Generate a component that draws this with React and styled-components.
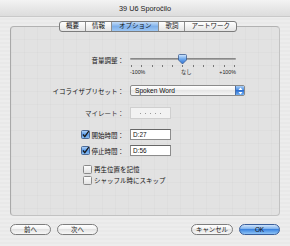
import React from "react";
import styled, { createGlobalStyle } from "styled-components";

const Global = createGlobalStyle`
  html, body { margin: 0; padding: 0; }
  body { background: #ececec; }
`;

const jp = `"Liberation Sans", "Noto Sans CJK JP", sans-serif`;

const Window = styled.div`
  width: 290px;
  height: 246px;
  display: flex;
  flex-direction: column;
  background: repeating-linear-gradient(0deg, #ededed 0 2px, #e9e9e9 2px 4px);
  font-family: ${jp};
  color: #111;
  overflow: hidden;
`;

const TitleBar = styled.div`
  height: 16px;
  flex: none;
  display: flex;
  align-items: center;
  justify-content: center;
  background: linear-gradient(#f3f3f3, #dcdcdc);
  border-bottom: 1px solid #c9c9c9;
  font-size: 7.3px;
  color: #1a1a1a;
`;

const Body = styled.div`
  flex: 1;
  display: flex;
  flex-direction: column;
  padding: 4px 10px 0 10px;
`;

const TabBar = styled.div`
  align-self: center;
  display: flex;
  height: 11px;
  margin-left: 6px;
  margin-bottom: -6px;
  position: relative;
  z-index: 1;
  border: 1px solid #7c7c7c;
  border-radius: 3px;
  overflow: hidden;
  background: linear-gradient(#ffffff, #e4e4e4);
  box-sizing: border-box;
`;

const Tab = styled.div`
  display: flex;
  align-items: center;
  padding: 0 ${(p) => p.$pad || 6}px;
  font-size: 6.5px;
  line-height: 1;
  border-left: ${(p) => (p.$first ? "none" : "1px solid #8e8e8e")};
  background: ${(p) =>
    p.$active ? "linear-gradient(#c2dcf8, #7fb0ea 50%, #9cc6f3)" : "transparent"};
`;

const Panel = styled.div`
  height: 190px;
  box-sizing: border-box;
  border: 1px solid #c2c2c2;
  border-top-color: #b2b2b2;
  border-left-color: #a9a9a9;
  border-radius: 4px;
  background-color: #e2e2e2;
  background-image: linear-gradient(90deg, rgba(0, 0, 0, 0.018) 1px, transparent 1px),
    linear-gradient(0deg, rgba(0, 0, 0, 0.018) 1px, transparent 1px);
  background-size: 13px 13px;
  display: flex;
  flex-direction: column;
  padding-top: 27px;
`;

const Row = styled.div`
  display: flex;
  align-items: ${(p) => (p.$top ? "flex-start" : "center")};
  gap: 6px;
  margin-top: ${(p) => p.$mt || 0}px;
  height: ${(p) => p.$h || 11}px;
  padding-left: ${(p) => p.$indent || 0}px;
`;

const Label = styled.div`
  width: 113px;
  height: 11px;
  flex: none;
  display: flex;
  align-items: center;
  justify-content: flex-end;
  gap: 2px;
  font-size: 6.5px;
  white-space: nowrap;
  color: ${(p) => (p.$dim ? "#333" : "#111")};
`;

const Text = styled.span`
  font-size: 6.5px;
  white-space: nowrap;
`;

const Slider = styled.div`
  width: 106px;
  display: flex;
  flex-direction: column;
`;

const TrackZone = styled.div`
  position: relative;
  height: 11px;
`;

const Track = styled.div`
  position: absolute;
  left: 0;
  right: 0;
  top: 4px;
  height: 2px;
  border-radius: 1px;
  background: linear-gradient(#7a7a7a, #b5b5b5);
`;

const Thumb = styled.svg`
  position: absolute;
  left: 47px;
  top: 0;
`;

const Ticks = styled.div`
  height: 3px;
  display: flex;
  justify-content: space-between;
  padding: 0 1px;
`;

const Tick = styled.span`
  width: 1px;
  height: 2px;
  background: #777;
`;

const ScaleLabels = styled.div`
  display: flex;
  justify-content: space-between;
  font-size: 5.3px;
  color: #222;
  line-height: 8px;
`;

const Popup = styled.div`
  width: 115px;
  height: 11px;
  box-sizing: border-box;
  border: 1px solid #8a8a8a;
  border-radius: 2px;
  background: linear-gradient(#ffffff, #f0f0f0 50%, #e6e6e6 50%, #f5f5f5);
  display: flex;
  align-items: center;
  font-size: 6.6px;
  padding-left: 4px;
  overflow: hidden;
`;

const PopupText = styled.span`
  flex: 1;
`;

const Stepper = styled.div`
  width: 8px;
  height: 100%;
  display: flex;
  align-items: center;
  justify-content: center;
  background: linear-gradient(#a9cdf6, #3d86e2 50%, #2c6fd2 50%, #72b0f1);
  border-left: 1px solid #4b6fa5;
`;

const Rating = styled.div`
  width: 41px;
  height: 12px;
  box-sizing: border-box;
  border: 1px solid #cfcfcf;
  background: #f2f2f2;
  display: flex;
  align-items: center;
  justify-content: center;
  gap: 4px;
`;

const Dot = styled.span`
  width: 1px;
  height: 1px;
  background: #9a9a9a;
`;

const Field = styled.div`
  width: 41px;
  height: 11px;
  box-sizing: border-box;
  border: 1px solid #8c8c8c;
  border-top-color: #666;
  background: #fff;
  font-size: 6.4px;
  display: flex;
  align-items: center;
  padding-left: 2px;
`;

const Footer = styled.div`
  display: flex;
  align-items: center;
  gap: 6px;
  margin-top: 8px;
  height: 11px;
`;

const Spacer = styled.div`
  flex: 1;
`;

const Button = styled.div`
  width: ${(p) => p.$w || 41}px;
  height: 11px;
  box-sizing: border-box;
  border-radius: 6px;
  border: 1px solid ${(p) => (p.$primary ? "#3b5f9b" : "#7d7d7d")};
  background: ${(p) =>
    p.$primary
      ? "linear-gradient(#cfe4fb, #6fa9ec 50%, #3d85e0 50%, #8fc4f6)"
      : "linear-gradient(#ffffff, #f1f1f1 50%, #e3e3e3 50%, #f7f7f7)"};
  display: flex;
  align-items: center;
  justify-content: center;
  font-size: 6.4px;
  color: #111;
`;

const CheckBox = ({ checked }) => (
  <svg width="9" height="9" viewBox="0 0 9 9" style={{ flex: "none" }}>
    <defs>
      <linearGradient id={checked ? "cbOn" : "cbOff"} x1="0" y1="0" x2="0" y2="1">
        {checked ? (
          <>
            <stop offset="0" stopColor="#b8d8fa" />
            <stop offset="0.5" stopColor="#5a9ae8" />
            <stop offset="1" stopColor="#8cc0f3" />
          </>
        ) : (
          <>
            <stop offset="0" stopColor="#ffffff" />
            <stop offset="1" stopColor="#e0e0e0" />
          </>
        )}
      </linearGradient>
    </defs>
    <rect
      x="0.5"
      y="0.5"
      width="8"
      height="8"
      rx="1"
      fill={`url(#${checked ? "cbOn" : "cbOff"})`}
      stroke={checked ? "#4d6a97" : "#8a8a8a"}
    />
    {checked && (
      <path d="M2 4.5 L3.8 6.6 L7.8 1.2" fill="none" stroke="#1a1a1a" strokeWidth="1.3" />
    )}
  </svg>
);

const ticks = Array.from({ length: 11 });

export default function App() {
  return (
    <>
      <Global />
      <Window>
        <TitleBar>39 U6 Sporočilo</TitleBar>
        <Body>
          <TabBar>
            <Tab $first>概要</Tab>
            <Tab>情報</Tab>
            <Tab $active $pad={7}>オプション</Tab>
            <Tab>歌詞</Tab>
            <Tab>アートワーク</Tab>
          </TabBar>
          <Panel>
            <Row $top $h={22}>
              <Label>音量調整：</Label>
              <Slider>
                <TrackZone>
                  <Track />
                  <Thumb width="11" height="11" viewBox="0 0 11 11">
                    <defs>
                      <linearGradient id="th" x1="0" y1="0" x2="0" y2="1">
                        <stop offset="0" stopColor="#d4e8fd" />
                        <stop offset="0.5" stopColor="#6aa6ec" />
                        <stop offset="1" stopColor="#2e70d4" />
                      </linearGradient>
                    </defs>
                    <path
                      d="M1.5 1.5 Q1.5 0.5 2.5 0.5 H8.5 Q9.5 0.5 9.5 1.5 V6 L5.5 10 L1.5 6 Z"
                      fill="url(#th)"
                      stroke="#3c5d92"
                      strokeWidth="0.8"
                    />
                  </Thumb>
                </TrackZone>
                <Ticks>
                  {ticks.map((_, i) => (
                    <Tick key={i} />
                  ))}
                </Ticks>
                <ScaleLabels>
                  <span>-100%</span>
                  <span style={{ marginLeft: 8 }}>なし</span>
                  <span>+100%</span>
                </ScaleLabels>
              </Slider>
            </Row>
            <Row $mt={9}>
              <Label>イコライザプリセット：</Label>
              <Popup>
                <PopupText>Spoken Word</PopupText>
                <Stepper>
                  <svg width="5" height="8" viewBox="0 0 5 8">
                    <path d="M2.5 0.5 L4.5 3 H0.5 Z M2.5 7.5 L4.5 5 H0.5 Z" fill="#fff" />
                  </svg>
                </Stepper>
              </Popup>
            </Row>
            <Row $mt={11} $h={12}>
              <Label $dim>マイレート：</Label>
              <Rating>
                {[0, 1, 2, 3, 4].map((i) => (
                  <Dot key={i} />
                ))}
              </Rating>
            </Row>
            <Row $mt={10}>
              <Label>
                <CheckBox checked />
                <Text>開始時間：</Text>
              </Label>
              <Field>D:27</Field>
            </Row>
            <Row $mt={5}>
              <Label>
                <CheckBox checked />
                <Text>停止時間：</Text>
              </Label>
              <Field>D:56</Field>
            </Row>
            <Row $mt={8} $h={10} $indent={72} style={{ gap: 2 }}>
              <CheckBox />
              <Text>再生位置を記憶</Text>
            </Row>
            <Row $mt={1} $h={10} $indent={72} style={{ gap: 2 }}>
              <CheckBox />
              <Text>シャッフル時にスキップ</Text>
            </Row>
          </Panel>
          <Footer>
            <Button>前へ</Button>
            <Button>次へ</Button>
            <Spacer />
            <Button $w={42}>キャンセル</Button>
            <Button $primary>OK</Button>
          </Footer>
        </Body>
      </Window>
    </>
  );
}
